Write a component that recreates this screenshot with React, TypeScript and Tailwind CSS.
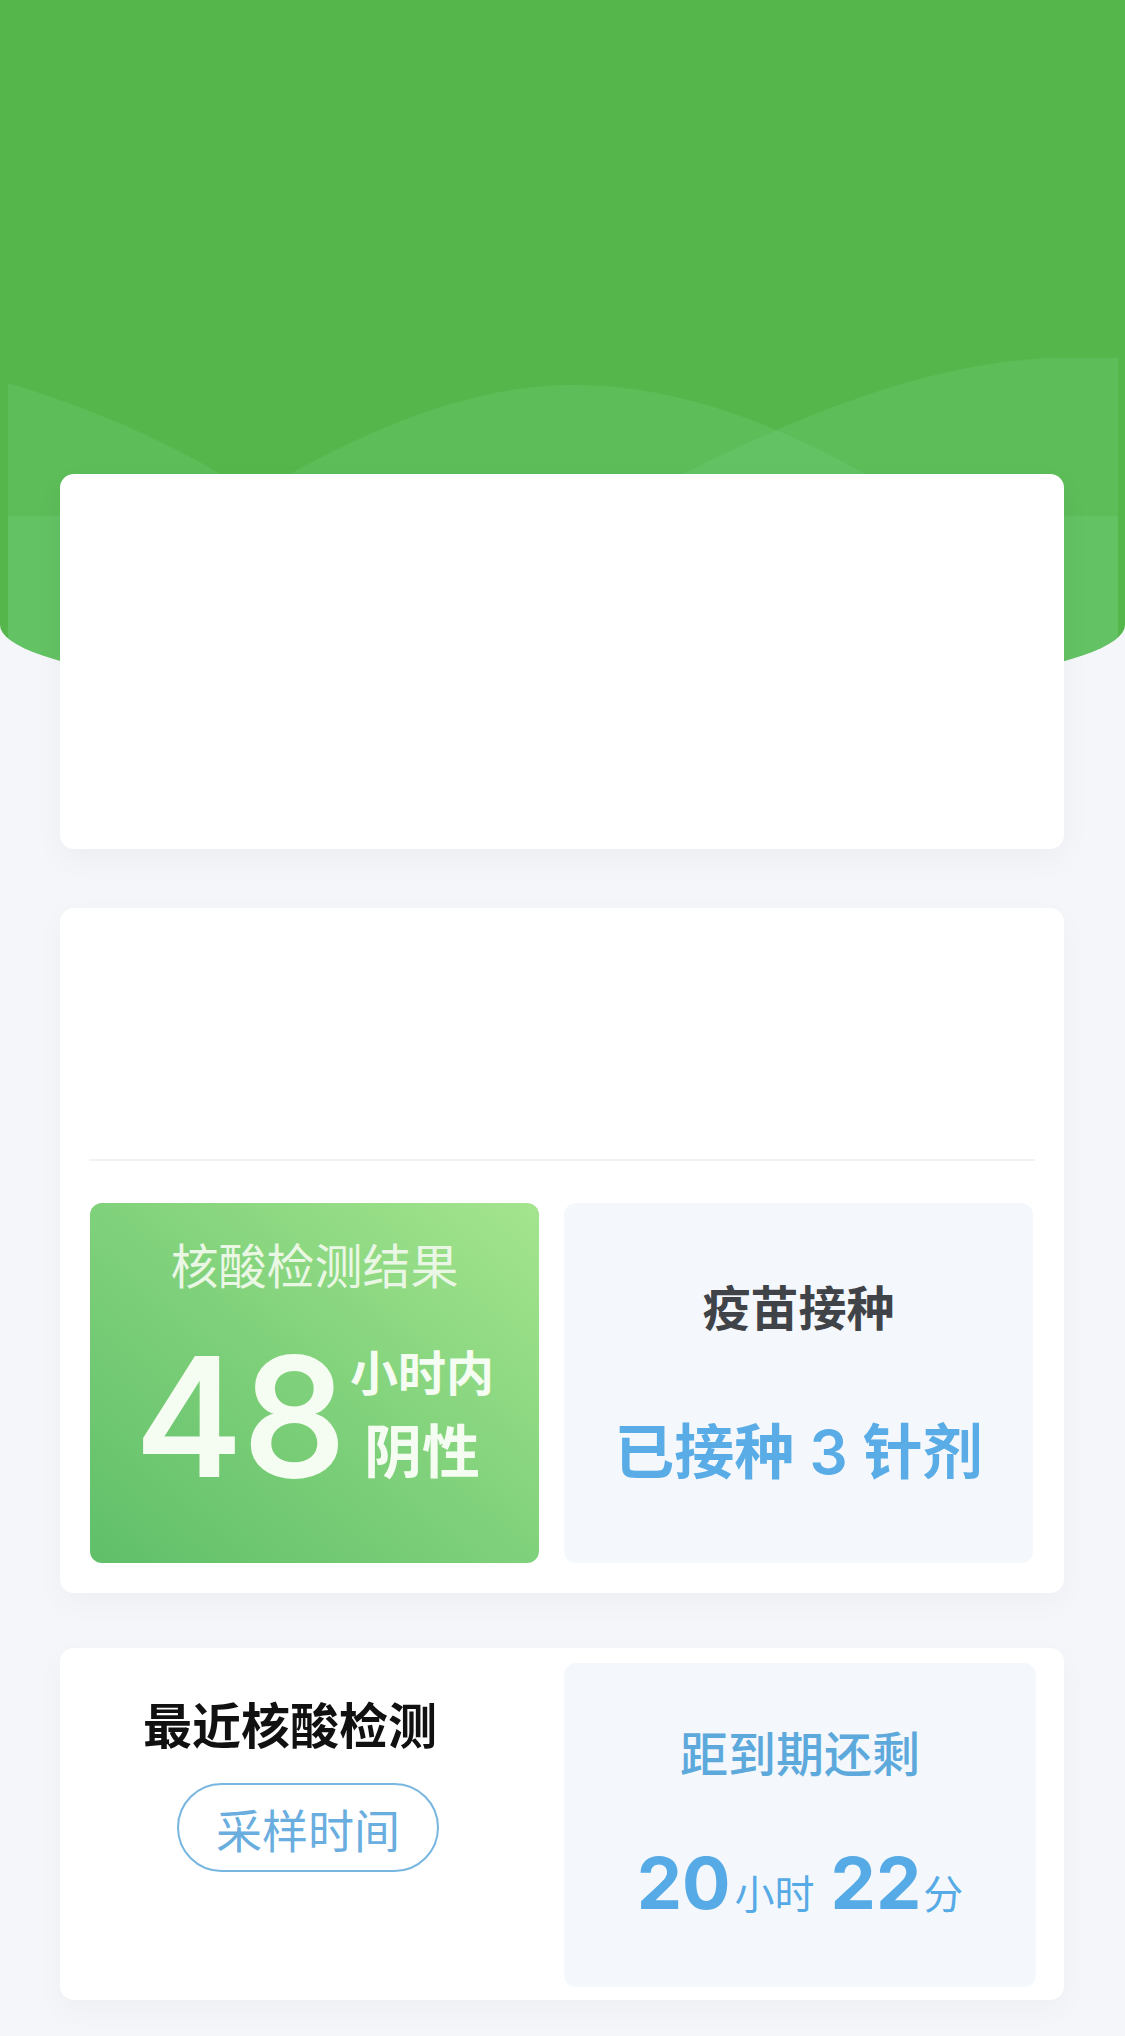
import React from "react";

const CJK = "font-['Noto_Sans_CJK_SC',sans-serif]";
const NUM = "font-['Inter','Noto_Sans_CJK_SC',sans-serif]";

function Waves() {
  const fill = "rgb(125,215,140)";
  return (
    <svg
      className="absolute inset-0 h-full w-full"
      viewBox="0 0 1125 705"
      preserveAspectRatio="none"
    >
      <path
        d="M8,383 Q130,420 222,475 T420,620 L420,705 L8,705 Z"
        fill={fill}
        fillOpacity="0.22"
      />
      <path
        d="M150,560 C300,460 440,385 572,385 C700,385 830,440 1000,560 L1000,705 L150,705 Z"
        fill={fill}
        fillOpacity="0.22"
      />
      <path
        d="M560,540 C720,450 900,360 1060,358 L1118,358 L1118,705 L560,705 Z"
        fill={fill}
        fillOpacity="0.22"
      />
      <rect x="8" y="516" width="1110" height="200" fill={fill} fillOpacity="0.22" />
    </svg>
  );
}

export default function App() {
  return (
    <div className={`min-h-[2036px] w-full bg-[#f5f6fa] ${CJK}`}>
      <div className="relative h-[705px] overflow-hidden bg-[#55b74b] rounded-bl-[50%_80px] rounded-br-[50%_80px]">
        <Waves />
      </div>

      <div className="relative -mt-[231px] flex flex-col pl-[60px] pr-[61px] pb-[36px]">
        {/* Card 1 */}
        <div className="h-[375px] rounded-[14px] bg-white shadow-[0_10px_30px_rgba(0,0,0,0.04)]" />

        {/* Card 2 */}
        <div className="mt-[59px] flex h-[685px] flex-col rounded-[14px] bg-white px-[29px] shadow-[0_10px_30px_rgba(0,0,0,0.03)]">
          <div className="h-[251px]" />
          <div className="h-[2px] bg-[#f1f2f4]" />
          <div className="mt-[42px] flex gap-[25px] pl-[1px]">
            <div className="flex h-[360px] w-[449px] flex-col items-center rounded-[12px] bg-linear-to-tr from-[#60bf69] via-[#80d17b] to-[#a4e58e] pt-[36px]">
              <div className="text-[48px] leading-none text-[#eaf7e4]">核酸检测结果</div>
              <div className="mt-[48px] flex items-start justify-center gap-[4px]">
                <div className={`${NUM} text-[164px] font-medium leading-none text-[#f5fcf1] [-webkit-text-stroke:2px_#f5fcf1]`}>48</div>
                <div className="mt-[11px] flex flex-col items-center text-[#f5fcf1]">
                  <div className="text-[48px] font-semibold leading-none">小时内</div>
                  <div className="mt-[25px] text-[58px] font-semibold leading-none">阴性</div>
                </div>
              </div>
            </div>
            <div className="flex h-[360px] w-[469px] flex-col items-center rounded-[12px] bg-[#f4f8fc] pt-[78px]">
              <div className="text-[48px] font-semibold leading-none text-[#404448]">疫苗接种</div>
              <div className={`${NUM} mt-[93px] whitespace-pre text-[60px] font-semibold leading-none text-[#5aace6]`}>
                已接种 3 针剂
              </div>
            </div>
          </div>
        </div>

        {/* Card 3 */}
        <div className="mt-[55px] flex h-[352px] rounded-[14px] bg-white pt-[15px] pr-[28px] pb-[13px] shadow-[0_10px_30px_rgba(0,0,0,0.03)]">
          <div className="flex flex-1 flex-col items-start pt-[35px]">
            <div className="ml-[83px] text-[49px] font-bold leading-none text-[#111111]">最近核酸检测</div>
            <div className="ml-[117px] mt-[36px] flex h-[89px] w-[262px] items-center justify-center rounded-full border-2 border-[#78b6e0] text-[46px] leading-none text-[#6aaedf]">
              采样时间
            </div>
          </div>
          <div className="flex w-[472px] flex-col items-center rounded-[12px] bg-[#f4f8fc] pt-[64px]">
            <div className="text-[48px] font-medium leading-none text-[#5ea9dc]">距到期还剩</div>
            <div className="mt-[72px] flex items-baseline text-[#56aae6]">
              <span className={`${NUM} text-[72px] font-bold leading-none`}>20</span>
              <span className="ml-[4px] text-[40px] leading-none">小时</span>
              <span className={`${NUM} ml-[16px] text-[72px] font-bold leading-none`}>22</span>
              <span className="ml-[2px] text-[40px] leading-none">分</span>
            </div>
          </div>
        </div>
      </div>
    </div>
  );
}
